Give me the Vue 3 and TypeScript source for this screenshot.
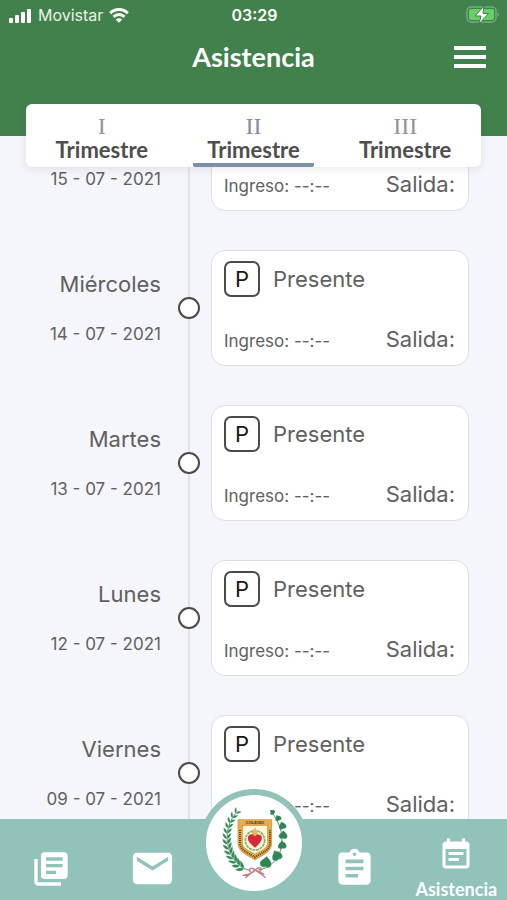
<script setup lang="ts">
import { onMounted, ref } from 'vue'

interface Entry {
  day: string
  date: string
}
interface Point {
  x: number
  y: number
}
interface Leaf extends Point {
  angle: number
  scale: number
}

const entries: Entry[] = [
  { day: 'Jueves', date: '15 - 07 - 2021' },
  { day: 'Miércoles', date: '14 - 07 - 2021' },
  { day: 'Martes', date: '13 - 07 - 2021' },
  { day: 'Lunes', date: '12 - 07 - 2021' },
  { day: 'Viernes', date: '09 - 07 - 2021' },
]

const terms = ['I', 'II', 'III']
const selected = ref(1)

// The list opens part way through its first entry.
const list = ref<HTMLElement | null>(null)
onMounted(() => {
  if (list.value) list.value.scrollTop = 72
})

// Places leaves in pairs along a cubic curve that serves as the stem.
function branch(p: Point[], count: number, spread: number): Leaf[] {
  const leaves: Leaf[] = []
  for (let i = 0; i < count; i++) {
    const t = 0.1 + (0.9 * i) / (count - 1)
    const u = 1 - t
    const x = u ** 3 * p[0].x + 3 * u * u * t * p[1].x + 3 * u * t * t * p[2].x + t ** 3 * p[3].x
    const y = u ** 3 * p[0].y + 3 * u * u * t * p[1].y + 3 * u * t * t * p[2].y + t ** 3 * p[3].y
    const dx = u * u * (p[1].x - p[0].x) + 2 * u * t * (p[2].x - p[1].x) + t * t * (p[3].x - p[2].x)
    const dy = u * u * (p[1].y - p[0].y) + 2 * u * t * (p[2].y - p[1].y) + t * t * (p[3].y - p[2].y)
    const angle = (Math.atan2(dy, dx) * 180) / Math.PI
    const scale = 1 - 0.35 * t
    leaves.push({ x, y, angle: angle - spread, scale }, { x, y, angle: angle + spread, scale })
  }
  return leaves
}

const laurel = branch(
  [{ x: 166, y: 272 }, { x: 100, y: 258 }, { x: 72, y: 160 }, { x: 122, y: 100 }], 13, 36)

const heartLeaves: Leaf[] = [
  { x: 212, y: 248, angle: 10, scale: 1.2 },
  { x: 245, y: 228, angle: -25, scale: 1.1 },
  { x: 261, y: 196, angle: -5, scale: 0.9 },
  { x: 264, y: 166, angle: 5, scale: 0.9 },
  { x: 262, y: 138, angle: -15, scale: 0.8 },
  { x: 249, y: 115, angle: -25, scale: 0.65 },
  { x: 232, y: 97, angle: -40, scale: 0.55 },
]
</script>

<template>
  <div class="app">
    <header class="top">
      <div class="status">
        <div class="carrier">
          <svg class="signal" viewBox="0 0 23 15" aria-hidden="true">
            <rect x="0" y="10" width="4" height="5" rx="1" />
            <rect x="6" y="7" width="4" height="8" rx="1" />
            <rect x="12" y="4" width="4" height="11" rx="1" />
            <rect x="18" y="1" width="4" height="14" rx="1" />
          </svg>
          <span>Movistar</span>
          <svg class="wifi" viewBox="0 0 20 15" aria-hidden="true">
            <path d="M1.2 5.2a12.6 12.6 0 0 1 17.6 0" />
            <path d="M4.5 8.8a8 8 0 0 1 11 0" />
            <path class="dot" d="M10 14.8 6.8 11.6a4.6 4.6 0 0 1 6.4 0z" />
          </svg>
        </div>
        <time class="clock">03:29</time>
        <svg class="battery" viewBox="0 0 34 20" aria-hidden="true">
          <rect class="case" x="1" y="2" width="29" height="15" rx="4" />
          <rect class="charge" x="3" y="4" width="25" height="11" rx="2" />
          <path class="case-tip" d="M31.5 7.5c2 .5 2 3.5 0 4z" />
          <path class="bolt" d="M18 1 9 11h6l-2 8 9.5-10.5H17z" />
        </svg>
      </div>
      <div class="title-row">
        <h1>Asistencia</h1>
        <button class="menu" type="button" aria-label="Menú">
          <span></span><span></span><span></span>
        </button>
      </div>
    </header>

    <nav class="tabs" aria-label="Trimestres">
      <button
        v-for="(term, i) in terms"
        :key="term"
        type="button"
        class="tab"
        :class="{ active: selected === i }"
        :aria-pressed="selected === i"
        @click="selected = i"
      >
        <span class="numeral">{{ term }}</span>
        <span class="term">Trimestre</span>
      </button>
    </nav>

    <main ref="list" class="timeline">
      <ol class="entries">
        <li v-for="entry in entries" :key="entry.date" class="entry">
          <div class="when">
            <span class="day">{{ entry.day }}</span>
            <time class="date">{{ entry.date }}</time>
          </div>
          <div class="rail"><span class="knot"></span></div>
          <article class="card">
            <div class="state">
              <span class="badge">P</span>
              <span>Presente</span>
            </div>
            <div class="hours">
              <span class="in">Ingreso: --:--</span>
              <span class="out">Salida:</span>
            </div>
          </article>
        </li>
      </ol>
    </main>

    <nav class="bottom" aria-label="Principal">
      <a href="#" class="item" aria-label="Cursos">
        <svg class="i-books" viewBox="0 0 24 24">
          <path d="M4 6H2v14c0 1.1.9 2 2 2h14v-2H4V6zm16-4H8c-1.1 0-2 .9-2 2v12c0 1.1.9 2 2 2h12c1.1 0 2-.9 2-2V4c0-1.1-.9-2-2-2zm-1 9H9V9h10v2zm-4 4H9v-2h6v2zm4-8H9V5h10v2z" />
        </svg>
      </a>
      <a href="#" class="item" aria-label="Mensajes">
        <svg class="i-mail" viewBox="0 0 24 24">
          <path d="M20 4H4c-1.1 0-2 .9-2 2v12c0 1.1.9 2 2 2h16c1.1 0 2-.9 2-2V6c0-1.1-.9-2-2-2zm0 4-8 5-8-5V6l8 5 8-5v2z" />
        </svg>
      </a>
      <a href="#" class="item home" aria-label="Inicio">
        <svg class="crest" viewBox="33 45 288 288">
          <path class="stem" d="M166 272C100 258 72 160 122 100" />
          <path
            v-for="(leaf, i) in laurel"
            :key="'l' + i"
            class="leaf"
            d="M0 0C7-8 18-8 28 0C18 5 8 5 0 0z"
            :transform="`translate(${leaf.x} ${leaf.y}) rotate(${leaf.angle}) scale(${leaf.scale})`"
          />
          <path class="stem" d="M190 270C250 262 296 180 226 90" />
          <path
            v-for="(leaf, i) in heartLeaves"
            :key="'h' + i"
            class="leaf"
            d="M0-17C3-11 15-8 15 3C15 11 6 14 1 10C-5 15-15 10-14 2C-13-6-4-9 0-17z"
            :transform="`translate(${leaf.x} ${leaf.y}) rotate(${leaf.angle}) scale(${leaf.scale})`"
          />
          <path class="shield" d="M129 119H230V190C230 216 203 225 180 240C157 225 129 216 129 190z" />
          <path class="field" d="M142 136H218V188C218 205 200 211 180 223C160 211 142 205 142 188z" />
          <text class="motto" x="180" y="131" text-anchor="middle">COLEGIO</text>
          <path class="lettering" d="M135 150V190C137 213 159 217 180 232C201 217 223 213 225 190V150" />
          <circle class="wreath" cx="180" cy="181" r="29" />
          <path class="flame" d="M180 142C184 152 190 154 188 166H171C169 154 176 152 180 142z" />
          <path class="heart" d="M180 203C161 188 156 178 160 169C165 160 176 162 180 169C185 161 197 162 200 170C203 180 193 191 180 203z" />
          <path class="ribbon" d="M180 270C166 258 160 270 166 276S176 275 180 270C194 258 202 264 197 272S186 275 180 270L164 282 143 286M180 270 195 280 212 293M179 270 151 294M181 270 208 283" />
        </svg>
      </a>
      <a href="#" class="item" aria-label="Tareas">
        <svg class="i-tasks" viewBox="0 0 24 24">
          <path d="M19 3h-4.18C14.4 1.84 13.3 1 12 1s-2.4.84-2.82 2H5c-1.1 0-2 .9-2 2v14c0 1.1.9 2 2 2h14c1.1 0 2-.9 2-2V5c0-1.1-.9-2-2-2zm-7 0c.55 0 1 .45 1 1s-.45 1-1 1-1-.45-1-1 .45-1 1-1zm2 14H7v-2h7v2zm3-4H7v-2h10v2zm0-4H7V7h10v2z" />
        </svg>
      </a>
      <a href="#" class="item current" aria-current="page">
        <svg class="i-event" viewBox="0 0 24 24">
          <path d="M19 3h-1V1h-2v2H8V1H6v2H5c-1.1 0-2 .9-2 2v14c0 1.1.9 2 2 2h14c1.1 0 2-.9 2-2V5c0-1.1-.9-2-2-2zm0 16H5V8h14v11zM17 10H7v2h10v-2zm-3 4H7v2h7v-2z" />
        </svg>
        <span>Asistencia</span>
      </a>
    </nav>
  </div>
</template>

<style>
body {
  margin: 0;
}
</style>

<style scoped>
.app {
  display: flex;
  flex-direction: column;
  height: 100vh;
  overflow: hidden;
  background: #f5f6fb;
  color: #606060;
  font-family: Inter, 'Liberation Sans', sans-serif;
}
button {
  border: 0;
  padding: 0;
  background: none;
  font: inherit;
  cursor: pointer;
}

.top {
  position: relative;
  z-index: 1;
  flex: none;
  height: 136px;
  background: #41814b;
  color: #fff;
}
.status {
  display: grid;
  grid-template-columns: 1fr auto 1fr;
  align-items: center;
  height: 30px;
  padding: 0 7px 0 9px;
  font-size: 16px;
}
.carrier {
  display: flex;
  align-items: center;
  gap: 6px;
  color: #e8f3e8;
}
.signal {
  width: 23px;
  height: 15px;
  fill: #fff;
}
.wifi {
  width: 20px;
  height: 15px;
  fill: none;
  stroke: #fff;
  stroke-width: 3;
}
.wifi .dot {
  fill: #fff;
  stroke: none;
}
.clock {
  font-weight: 600;
}
.battery {
  justify-self: end;
  width: 34px;
  height: 20px;
}
.case {
  fill: none;
  stroke: #79a980;
  stroke-width: 1.5;
}
.case-tip {
  fill: #79a980;
}
.charge {
  fill: #65d165;
}
.bolt {
  fill: #fff;
  stroke: #41814b;
}
.title-row {
  display: grid;
  grid-template-columns: 1fr auto 1fr;
  align-items: center;
  height: 54px;
  padding: 0 21px;
}
h1 {
  grid-column: 2;
  margin: 0;
  font: 700 27px/32px Lato, sans-serif;
}
.menu {
  display: flex;
  flex-direction: column;
  justify-self: end;
  gap: 5px;
  width: 32px;
}
.menu span {
  height: 4px;
  background: #fff;
}

.tabs {
  position: relative;
  z-index: 2;
  display: grid;
  flex: none;
  grid-template-columns: repeat(3, 1fr);
  height: 63px;
  margin: -32px 26px 0;
  border-radius: 6px;
  background: #fff;
  box-shadow: 0 2px 8px rgba(60, 70, 90, 0.12);
}
.tab {
  display: flex;
  flex-direction: column;
  align-items: center;
  margin: 0 15px;
  padding-top: 10px;
  box-sizing: border-box;
  border-bottom: 4px solid transparent;
  border-radius: 2px;
}
.tab.active {
  border-color: #7c8fa6;
}
.numeral {
  color: #929497;
  font: 24px/24px 'Liberation Serif', serif;
}
.active .numeral {
  color: #7c8fa6;
}
.term {
  color: #4e4e4e;
  font: 700 22px/24px Lato, sans-serif;
}

.timeline {
  flex: 1;
  min-height: 0;
  overflow-y: auto;
  scrollbar-width: none;
}
.entries {
  margin: 0;
  padding: 0;
  list-style: none;
}
.entry {
  display: grid;
  grid-template-columns: 161px 50px 1fr;
  padding-right: 38px;
}
.when {
  display: flex;
  flex-direction: column;
  align-items: flex-end;
  height: 116px;
  padding-top: 19px;
  box-sizing: border-box;
  gap: 23px;
}
.day {
  font-size: 22px;
  line-height: 30px;
}
.date {
  font-size: 17px;
  line-height: 24px;
}
.rail {
  display: flex;
  justify-content: center;
  margin-left: 6px;
  padding-top: 47px;
  background: linear-gradient(#dfe1e5, #dfe1e5) center / 2px 100% no-repeat;
}
.knot {
  width: 22px;
  height: 22px;
  box-sizing: border-box;
  border: 2px solid #4a4a4a;
  border-radius: 50%;
  background: #fff;
}
.card {
  display: flex;
  flex-direction: column;
  justify-content: space-between;
  height: 116px;
  margin-bottom: 39px;
  padding: 10px 13px 9px 12px;
  box-sizing: border-box;
  border: 1px solid #dcdfe3;
  border-radius: 14px;
  background: #fff;
}
.state {
  display: flex;
  align-items: center;
  gap: 13px;
  font-size: 22px;
}
.badge {
  display: grid;
  place-items: center;
  width: 36px;
  height: 36px;
  box-sizing: border-box;
  border: 2px solid #4a4a4a;
  border-radius: 7px;
  color: #161616;
}
.hours {
  display: flex;
  align-items: baseline;
  justify-content: space-between;
  line-height: 30px;
}
.in {
  font-size: 17px;
}
.out {
  font-size: 22px;
}

.bottom {
  position: relative;
  z-index: 2;
  display: grid;
  flex: none;
  grid-template-columns: repeat(5, minmax(0, 1fr));
  height: 81px;
  background: #91c3bb;
}
.item {
  display: flex;
  flex-direction: column;
  align-items: center;
  justify-content: center;
  padding-top: 18px;
  color: #fff;
  font: 700 18px/20px Lato, sans-serif;
  text-decoration: none;
}
.item svg {
  flex: none;
  fill: currentColor;
}
.item .i-books {
  width: 40px;
  height: 40px;
}
.item .i-mail {
  width: 47px;
  height: 47px;
}
.item .i-tasks {
  width: 43px;
  height: 43px;
}
.item .i-event {
  width: 36px;
  height: 36px;
}
.item.current {
  justify-content: flex-end;
  gap: 6px;
  padding: 0 0 1px;
}
.item.home {
  padding: 0;
}
.item .crest {
  width: 96px;
  height: 96px;
  margin-top: -34px;
  border: 6px solid #91c3bb;
  border-radius: 50%;
  background: #fff;
}
.crest .stem {
  fill: none;
  stroke: #568354;
  stroke-width: 3;
}
.crest .leaf {
  fill: #2f8654;
  stroke: #d3e6d7;
  stroke-width: 1;
}
.crest .shield {
  fill: #e9ad49;
  stroke: #bd8635;
  stroke-width: 2;
}
.crest .field {
  fill: #fff6d5;
  stroke: #b67a30;
  stroke-width: 2;
}
.crest .motto {
  fill: #3e2812;
  font: 700 12px 'Liberation Sans', sans-serif;
}
.crest .lettering {
  fill: none;
  stroke: #603c18;
  stroke-width: 6;
  stroke-dasharray: 3 3;
}
.crest .wreath {
  fill: none;
  stroke: #82ad7a;
  stroke-width: 5;
  stroke-dasharray: 9 2;
}
.crest .flame {
  fill: #f0b75a;
}
.crest .heart {
  fill: #d8293a;
}
.crest .ribbon {
  fill: none;
  stroke: #c77d87;
  stroke-width: 4;
}
</style>
